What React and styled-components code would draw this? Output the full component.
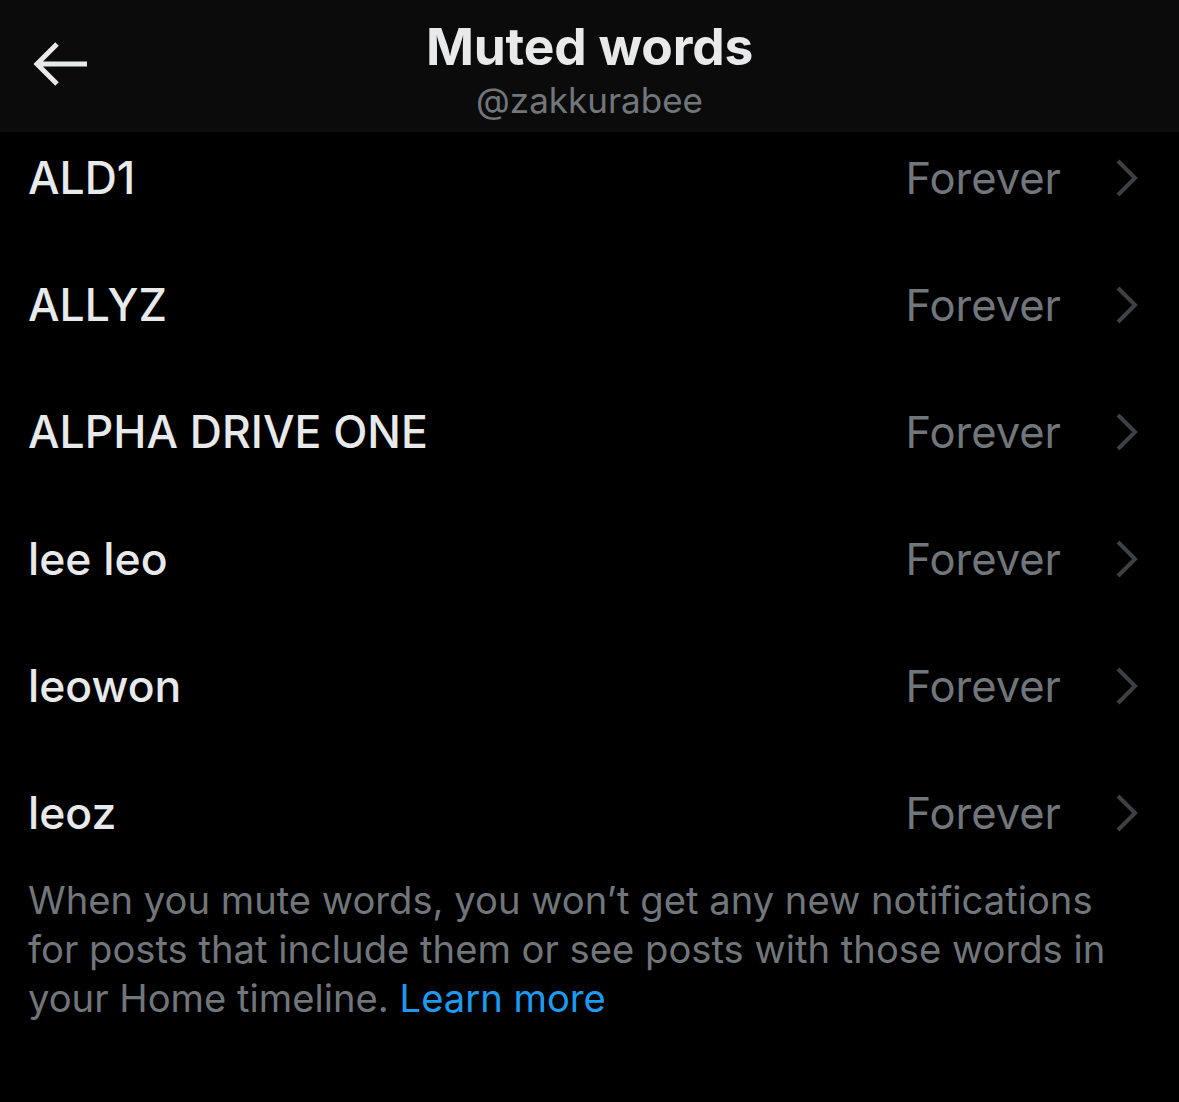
import React from 'react';
import styled, { createGlobalStyle } from 'styled-components';

const GlobalStyle = createGlobalStyle`
  html, body {
    margin: 0;
    padding: 0;
    background: #000;
  }
  body {
    font-family: Inter, "Noto Sans", "Liberation Sans", sans-serif;
    -webkit-font-smoothing: antialiased;
  }
`;

const Page = styled.div`
  width: 1179px;
  height: 1102px;
  background: #000;
  overflow: hidden;
  display: flex;
  flex-direction: column;
`;

const Header = styled.header`
  position: relative;
  z-index: 2;
  height: 132px;
  flex-shrink: 0;
  background: #0b0b0b;
  display: grid;
  grid-template-columns: 120px 1fr 120px;
  align-items: center;
`;

const BackButton = styled.button`
  background: none;
  border: none;
  padding: 0 0 0 33px;
  margin-top: -4px;
  height: 100%;
  display: flex;
  align-items: center;
  color: #e7e9ea;
  cursor: pointer;
`;

const TitleBlock = styled.div`
  display: flex;
  flex-direction: column;
  align-items: center;
  gap: 8px;
  margin-top: 8px;
`;

const Title = styled.h1`
  margin: 0;
  font-size: 51.5px;
  font-weight: 700;
  letter-spacing: -0.2px;
  line-height: 52px;
  color: #e7e9ea;
`;

const Subtitle = styled.div`
  font-size: 35px;
  line-height: 40px;
  color: #71767b;
`;

const List = styled.ul`
  list-style: none;
  margin: -18px 0 0;
  padding: 0;
`;

const Row = styled.li`
  height: 127px;
  display: flex;
  align-items: center;
  padding: 0 40px 0 28px;
`;

const Word = styled.span`
  flex: 1;
  font-size: 44.5px;
  font-weight: 500;
  color: #e7e9ea;
`;

const Duration = styled.span`
  font-size: 43.5px;
  color: #71767b;
  margin-right: 54px;
`;

const Chevron = styled.svg`
  width: 24px;
  height: 38px;
  color: #3e4144;
`;

const Note = styled.p`
  margin: 0;
  padding: 0 40px 0 28px;
  font-size: 38.2px;
  line-height: 49px;
  color: #71767b;
`;

const Link = styled.a`
  color: #1d9bf0;
  text-decoration: none;
`;

const words = ['ALD1', 'ALLYZ', 'ALPHA DRIVE ONE', 'lee leo', 'leowon', 'leoz'];

export default function App() {
  return (
    <>
      <GlobalStyle />
      <Page>
        <Header>
          <BackButton aria-label="Back">
            <svg width="56" height="46" viewBox="0 0 56 46" fill="none">
              <path d="M24 3 L4 23 L24 43 M4 23 H54" stroke="currentColor" strokeWidth="5" />
            </svg>
          </BackButton>
          <TitleBlock>
            <Title>Muted words</Title>
            <Subtitle>@zakkurabee</Subtitle>
          </TitleBlock>
          <div />
        </Header>
        <List>
          {words.map((w) => (
            <Row key={w}>
              <Word>{w}</Word>
              <Duration>Forever</Duration>
              <Chevron viewBox="0 0 24 38" fill="none">
                <path d="M3 2 L20 19 L3 36" stroke="currentColor" strokeWidth="4" />
              </Chevron>
            </Row>
          ))}
        </List>
        <Note>
          When you mute words, you won’t get any new notifications for posts that include them or see
          posts with those words in your Home timeline. <Link href="#">Learn more</Link>
        </Note>
      </Page>
    </>
  );
}
